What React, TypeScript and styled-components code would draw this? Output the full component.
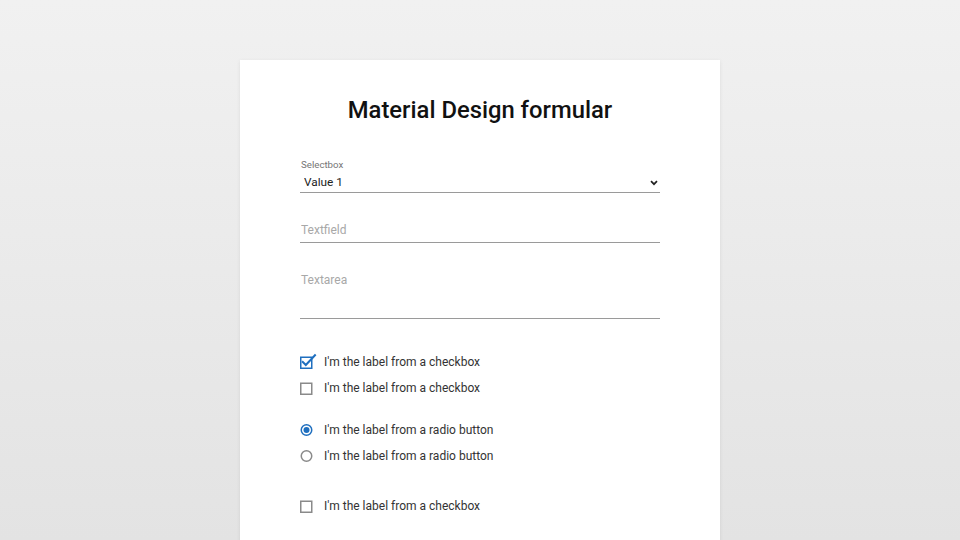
import styled, { createGlobalStyle } from 'styled-components'

const GlobalStyle = createGlobalStyle`
  html, body {
    margin: 0;
    height: 100%;
  }
  body {
    font-family: Roboto, "Liberation Sans", sans-serif;
    background: linear-gradient(180deg, #f1f1f1 0%, #e3e3e3 100%);
    overflow: hidden;
  }
`

const Page = styled.div`
  height: 540px;
  padding-top: 60px;
  box-sizing: border-box;
`

const Card = styled.div`
  width: 480px;
  min-height: 520px;
  margin: 0 auto;
  background: #fff;
  box-shadow: 0 1px 4px rgba(0, 0, 0, 0.08);
`

const Title = styled.h1`
  margin: 0;
  padding-top: 36px;
  font-size: 23.8px;
  line-height: 28px;
  font-weight: 500;
  color: #111;
  text-align: center;
`

const Form = styled.form`
  padding: 0 60px;
  display: flex;
  flex-direction: column;
`

const Field = styled.div<{ $top: number }>`
  margin-top: ${(p) => p.$top}px;
  position: relative;
`

const SmallLabel = styled.label`
  display: block;
  padding-left: 1px;
  font-size: 9.7px;
  line-height: 12px;
  color: #757575;
`

const Select = styled.select`
  appearance: none;
  width: 100%;
  height: 20px;
  margin: 0;
  padding: 0 0 1px 4px;
  border: none;
  border-bottom: 1px solid #9a9a9a;
  border-radius: 0;
  background: transparent;
  font-family: inherit;
  font-size: 11.8px;
  color: #222;
  outline: none;
`

const Chevron = styled.svg`
  position: absolute;
  right: 2px;
  bottom: 7px;
  pointer-events: none;
`

const TextInput = styled.input`
  width: 100%;
  height: 25px;
  margin: 0;
  padding: 0 0 1px 1px;
  box-sizing: border-box;
  border: none;
  border-bottom: 1px solid #9a9a9a;
  font-family: inherit;
  font-size: 12px;
  color: #222;
  outline: none;

  &::placeholder {
    color: #a8a8a8;
  }
`

const TextArea = styled.textarea`
  display: block;
  width: 100%;
  height: 51px;
  margin: 0;
  padding: 4px 0 0 1px;
  box-sizing: border-box;
  border: none;
  border-bottom: 1px solid #9a9a9a;
  resize: none;
  font-family: inherit;
  font-size: 12px;
  line-height: 16px;
  color: #222;
  outline: none;

  &::placeholder {
    color: #a8a8a8;
  }
`

const Group = styled.div<{ $top: number }>`
  margin-top: ${(p) => p.$top}px;
  display: flex;
  flex-direction: column;
`

const Option = styled.label`
  display: flex;
  align-items: center;
  height: 26px;
  gap: 8px;
  font-size: 12px;
  color: #333;
  cursor: pointer;
`

const Mark = styled.span`
  width: 16px;
  height: 16px;
  display: flex;
  align-items: center;
  justify-content: flex-start;
`

const BLUE = '#1f6fbf'
const GREY = '#8a8a8a'

const CheckIcon = ({ checked }: { checked?: boolean }) => (
  <svg width="16" height="16" viewBox="0 0 16 16" style={{ overflow: 'visible' }}>
    <rect
      x="0.75"
      y="3.25"
      width="11"
      height="11"
      fill="none"
      stroke={checked ? BLUE : GREY}
      strokeWidth="1.5"
    />
    {checked && (
      <path
        d="M2.8 8 L5.8 11 L15 1.2"
        fill="none"
        stroke={BLUE}
        strokeWidth="2"
        strokeLinecap="square"
      />
    )}
  </svg>
)

const RadioIcon = ({ checked }: { checked?: boolean }) => (
  <svg width="16" height="16" viewBox="0 0 16 16">
    <circle
      cx="6.5"
      cy="8"
      r="5.25"
      fill="none"
      stroke={checked ? BLUE : GREY}
      strokeWidth="1.5"
    />
    {checked && <circle cx="6.5" cy="8" r="3" fill={BLUE} />}
  </svg>
)

const App = () => {
  return (
    <>
      <GlobalStyle />
      <Page>
        <Card>
          <Title>Material Design formular</Title>
          <Form onSubmit={(e) => e.preventDefault()}>
            <Field $top={35}>
              <SmallLabel htmlFor="selectbox">Selectbox</SmallLabel>
              <Select id="selectbox" defaultValue="1">
                <option value="1">Value 1</option>
                <option value="2">Value 2</option>
                <option value="3">Value 3</option>
              </Select>
              <Chevron width="8" height="6" viewBox="0 0 8 6">
                <path
                  d="M1 1.2 L4 4.2 L7 1.2"
                  fill="none"
                  stroke="#222"
                  strokeWidth="1.7"
                />
              </Chevron>
            </Field>
            <Field $top={25}>
              <TextInput type="text" placeholder="Textfield" />
            </Field>
            <Field $top={25}>
              <TextArea placeholder="Textarea" />
            </Field>

            <Group $top={30}>
              <Option>
                <Mark>
                  <CheckIcon checked />
                </Mark>
                I'm the label from a checkbox
              </Option>
              <Option>
                <Mark>
                  <CheckIcon />
                </Mark>
                I'm the label from a checkbox
              </Option>
            </Group>

            <Group $top={16}>
              <Option>
                <Mark>
                  <RadioIcon checked />
                </Mark>
                I'm the label from a radio button
              </Option>
              <Option>
                <Mark>
                  <RadioIcon />
                </Mark>
                I'm the label from a radio button
              </Option>
            </Group>

            <Group $top={24}>
              <Option>
                <Mark>
                  <CheckIcon />
                </Mark>
                I'm the label from a checkbox
              </Option>
            </Group>
          </Form>
        </Card>
      </Page>
    </>
  )
}

export default App
